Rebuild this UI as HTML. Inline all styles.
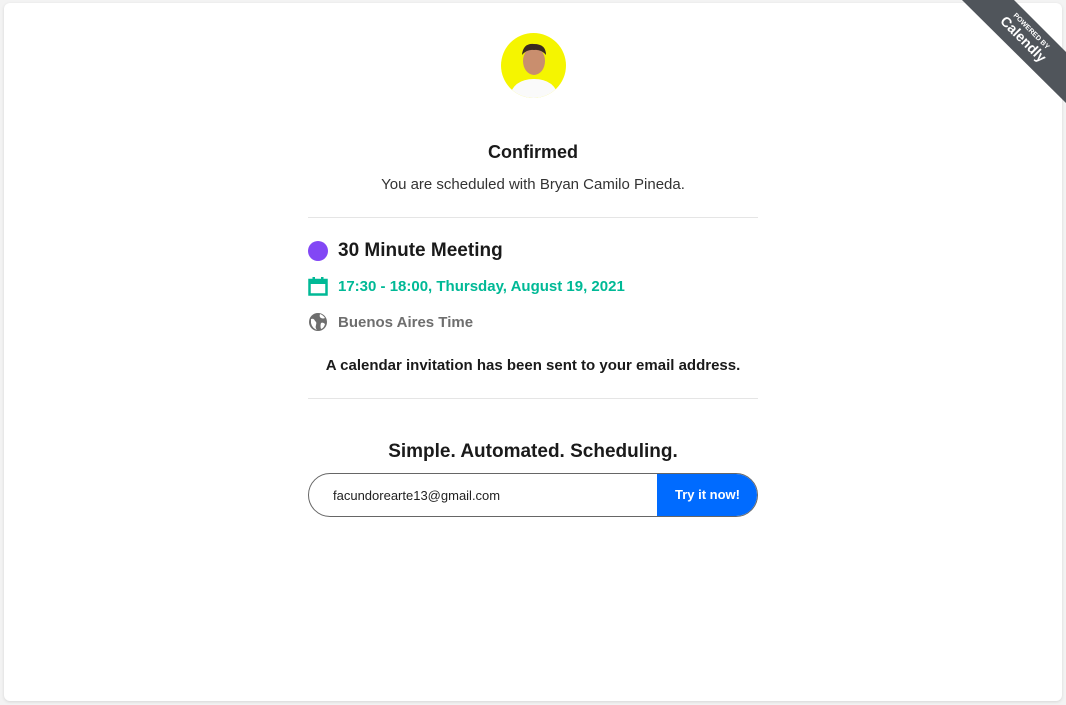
<!DOCTYPE html>
<html><head><style>
body{margin:0;background:#f3f3f3;font-family:"Liberation Sans",sans-serif;width:1066px;height:705px;overflow:hidden;position:relative}
.card{position:absolute;left:4px;top:3px;width:1058px;height:698px;background:#fff;border-radius:6px;box-shadow:0 1px 3px rgba(0,0,0,.12)}
.rib{position:absolute;left:0;top:0;width:1066px;height:705px;background:#50555b;clip-path:polygon(962px 0,1014px 0,1066px 52px,1066px 103px)}
.rt{position:absolute;left:976px;top:26px;width:100px;text-align:center;color:#fff;transform:rotate(45deg);line-height:1}
.av{position:absolute;left:501px;top:33px;width:65px;height:65px;border-radius:50%;background:#f5f500;overflow:hidden}
.c{position:absolute;left:0;width:1066px;text-align:center;color:#1a1a1a}
.hr{position:absolute;left:308px;width:450px;height:1px;background:#e5e5e5}
.row{position:absolute;left:308px;display:flex;align-items:center;font-weight:bold}
</style></head><body>
<div class="card"></div>
<div class="rib"></div>
<div class="rt"><div style="font-size:7px;font-weight:bold">POWERED BY</div><div style="font-size:14px;font-weight:bold">Calendly</div></div>
<div class="av"><svg width="65" height="65"><ellipse cx="33" cy="28" rx="11" ry="14" fill="#c98e6e"/><path d="M21 22 Q22 10 33 11 Q45 11 45 22 Q40 16 33 17 Q26 16 21 22Z" fill="#3a2a20"/><path d="M8 65 Q12 46 33 46 Q54 46 58 65Z" fill="#fafafa"/></svg></div>
<div class="c" style="top:142px;font-size:18px;font-weight:bold">Confirmed</div>
<div class="c" style="top:176px;font-size:15px;color:#333">You are scheduled with Bryan Camilo Pineda.</div>
<div class="hr" style="top:217px"></div>
<div class="row" style="top:240px;font-size:19px;color:#1a1a1a"><span style="width:20px;height:20px;border-radius:50%;background:#8247f5;margin-right:10px"></span>30 Minute Meeting</div>
<div class="row" style="top:276px;font-size:15px;color:#00b996"><svg width="20" height="20" style="margin-right:10px" viewBox="0 0 20 20"><rect x="1.5" y="4" width="17" height="14.5" fill="none" stroke="#00b996" stroke-width="2.5"/><rect x="1.5" y="4" width="17" height="4" fill="#00b996"/><rect x="4.5" y="1" width="2.5" height="4" fill="#00b996"/><rect x="13" y="1" width="2.5" height="4" fill="#00b996"/></svg>17:30 - 18:00, Thursday, August 19, 2021</div>
<div class="row" style="top:312px;font-size:15px;color:#6e6e6e"><svg width="20" height="20" style="margin-right:10px" viewBox="0 0 20 20"><circle cx="10" cy="10" r="9" fill="#6e6e6e"/><path d="M3 7 Q6 6 7 9 Q9 10 8 13 Q7 16 9 18 Q4 16 3 11Z M12 2 Q11 5 13 6 Q15 7 17 6 Q15 3 12 2Z M13 11 Q15 10 17 12 Q16 16 13 17 Q12 14 13 11Z" fill="#fff"/></svg>Buenos Aires Time</div>
<div class="c" style="top:357px;font-size:15px;font-weight:bold">A calendar invitation has been sent to your email address.</div>
<div class="hr" style="top:398px"></div>
<div class="c" style="top:441px;font-size:19px;font-weight:bold">Simple. Automated. Scheduling.</div>
<div style="position:absolute;left:308px;top:473px;width:450px;height:44px;border:1px solid #666;border-radius:22px;box-sizing:border-box;overflow:hidden">
<div style="position:absolute;left:24px;top:14px;font-size:13px;color:#222">facundorearte13@gmail.com</div>
<div style="position:absolute;right:-1px;top:-1px;width:101px;height:44px;background:#006bff;color:#fff;font-size:13px;font-weight:bold;text-align:center;line-height:44px">Try it now!</div>
</div>
</body></html>
